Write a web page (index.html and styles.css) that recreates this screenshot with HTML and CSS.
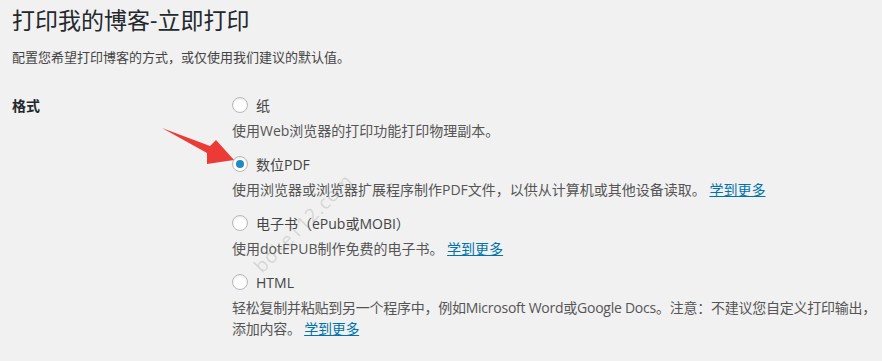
FILE: index.html
```html
<!DOCTYPE html>
<html lang="zh-CN">
<head>
    <meta charset="UTF-8">
    <meta name="viewport" content="width=device-width, initial-scale=1.0">
    <title>打印我的博客</title>
    <link rel="stylesheet" href="styles.css">
</head>
<body>

    <div class="wrap">
        <h1>打印我的博客-立即打印</h1>
        <p class="intro">配置您希望打印博客的方式，或仅使用我们建议的默认值。</p>

        <div class="form-row">
            <div class="row-label">格式</div>
            <div class="row-field">
                <div class="option">
                    <label><input type="radio" name="format" value="paper"> 纸</label>
                    <p class="desc">使用Web浏览器的打印功能打印物理副本。</p>
                </div>
                <div class="option">
                    <label><input type="radio" name="format" value="pdf" checked> 数位PDF</label>
                    <p class="desc">使用浏览器或浏览器扩展程序制作PDF文件，以供从计算机或其他设备读取。 <a href="#">学到更多</a></p>
                </div>
                <div class="option">
                    <label><input type="radio" name="format" value="epub"> 电子书（ePub或MOBI）</label>
                    <p class="desc">使用dotEPUB制作免费的电子书。 <a href="#">学到更多</a></p>
                </div>
                <div class="option">
                    <label><input type="radio" name="format" value="html"> HTML</label>
                    <p class="desc tight">轻松复制并粘贴到另一个程序中，例如Microsoft Word或Google Docs。注意：不建议您自定义打印输出，<br>添加内容。 <a href="#">学到更多</a></p>
                </div>
            </div>
        </div>
    </div>

    <!-- 截图上的标注 -->
    <svg class="arrow" width="90" height="50" viewBox="160 122 90 50">
        <polygon points="162,128 210,146 216,140 234,160 207,164 207,153" fill="#ec3b36"/>
    </svg>
    <div class="watermark">boke112.com</div>

</body>
</html>
```

FILE: styles.css
```css
* {
    margin: 0;
    padding: 0;
    box-sizing: border-box;
}

html,
body {
    height: 100%;
    overflow: hidden;
}

body {
    background: #f1f1f1;
    color: #444;
    font-family: "Open Sans", "Noto Sans CJK SC", sans-serif;
    font-size: 13px;
    position: relative;
}

.wrap {
    padding: 5px 0 0 12px;
}

h1 {
    font-size: 23px;
    font-weight: 400;
    line-height: 30px;
    color: #23282d;
}

.intro {
    margin-top: 12px;
    line-height: 20px;
    color: #444;
}

.form-row {
    display: flex;
    margin-top: 29px;
}

.row-label {
    width: 220px;
    flex-shrink: 0;
    font-size: 14px;
    font-weight: 600;
    color: #23282d;
    line-height: 20px;
}

.row-field {
    display: flex;
    flex-direction: column;
    gap: 14px;
}

.option label {
    display: flex;
    align-items: center;
    gap: 8px;
    font-size: 14px;
    line-height: 20px;
    color: #444;
}

.option input[type="radio"] {
    appearance: none;
    -webkit-appearance: none;
    width: 16px;
    height: 16px;
    border: 1px solid #b4b9be;
    border-radius: 50%;
    background: #fff;
    box-shadow: inset 0 1px 2px rgba(0, 0, 0, 0.1);
    display: flex;
    align-items: center;
    justify-content: center;
    margin-top: -3px;
}

.option input[type="radio"]:checked::before {
    content: "";
    width: 8px;
    height: 8px;
    border-radius: 50%;
    background: #1e8cbe;
}

.desc {
    margin-top: 4px;
    font-size: 14px;
    line-height: 21px;
    color: #555;
    white-space: nowrap;
}

.desc.tight {
    letter-spacing: -0.25px;
}

.desc a {
    color: #0073aa;
}

.arrow {
    position: absolute;
    left: 160px;
    top: 122px;
}

.watermark {
    position: absolute;
    left: 238px;
    top: 210px;
    font-size: 19px;
    color: rgba(110, 110, 110, 0.22);
    transform: rotate(-45deg);
    letter-spacing: 1px;
}
```
